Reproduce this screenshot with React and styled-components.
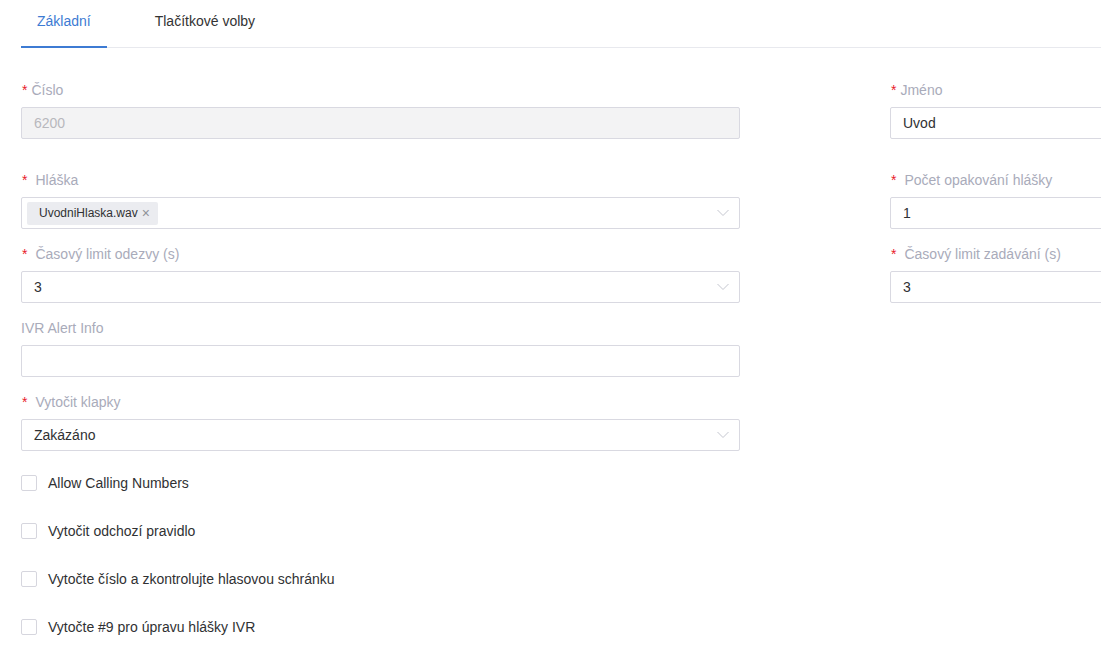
import styled, { createGlobalStyle } from "styled-components";

const GlobalStyle = createGlobalStyle`
  body {
    margin: 0;
    background: #fff;
    font-family: "Liberation Sans", Arial, sans-serif;
    overflow: hidden;
  }
`;

const Chevron = () => (
  <svg width="12" height="7" viewBox="0 0 12 7" fill="none">
    <path d="M0.5 0.5 L6 6 L11.5 0.5" stroke="#c4c6cf" strokeWidth="1" />
  </svg>
);

const Field = ({ label, required, tight, children, first }) => (
  <Item $first={first}>
    <Label>
      {required && <Star $tight={tight}>*</Star>}
      {label}
    </Label>
    {children}
  </Item>
);

const App = () => {
  return (
    <Page>
      <GlobalStyle />
      <Tabs>
        <Tab $active>Základní</Tab>
        <Tab>Tlačítkové volby</Tab>
      </Tabs>
      <Form>
        <Column>
          <Field label="Číslo" required tight first>
            <Input $disabled>6200</Input>
          </Field>
          <Field label="Hláška" required>
            <Input $tags>
              <Tag>
                UvodniHlaska.wav <TagClose>×</TagClose>
              </Tag>
              <Arrow>
                <Chevron />
              </Arrow>
            </Input>
          </Field>
          <Field label="Časový limit odezvy (s)" required>
            <Input>
              3
              <Arrow>
                <Chevron />
              </Arrow>
            </Input>
          </Field>
          <Field label="IVR Alert Info">
            <Input />
          </Field>
          <Field label="Vytočit klapky" required>
            <Input>
              Zakázáno
              <Arrow>
                <Chevron />
              </Arrow>
            </Input>
          </Field>
          <Checks>
            <CheckRow>
              <Box />
              Allow Calling Numbers
            </CheckRow>
            <CheckRow>
              <Box />
              Vytočit odchozí pravidlo
            </CheckRow>
            <CheckRow>
              <Box />
              Vytočte číslo a zkontrolujte hlasovou schránku
            </CheckRow>
            <CheckRow>
              <Box />
              Vytočte #9 pro úpravu hlášky IVR
            </CheckRow>
          </Checks>
        </Column>
        <Column>
          <Field label="Jméno" required tight first>
            <Input>Uvod</Input>
          </Field>
          <Field label="Počet opakování hlášky" required>
            <Input>1</Input>
          </Field>
          <Field label="Časový limit zadávání (s)" required>
            <Input>3</Input>
          </Field>
        </Column>
      </Form>
    </Page>
  );
};

const Page = styled.div`
  padding: 0 0 0 21px;
  width: 1600px;
`;

const Tabs = styled.div`
  display: flex;
  gap: 32px;
  height: 48px;
  box-sizing: border-box;
  border-bottom: 1px solid #e8e9ee;
`;

const Tab = styled.div`
  display: flex;
  align-items: center;
  padding: 0 16px 4px;
  font-size: 14px;
  color: ${(p) => (p.$active ? "#3d7bd3" : "#333")};
  border-bottom: 2px solid ${(p) => (p.$active ? "#3d7bd3" : "transparent")};
  margin-bottom: -1px;
`;

const Form = styled.div`
  display: grid;
  grid-template-columns: 719px 719px;
  column-gap: 150px;
  padding-top: 31px;
`;

const Column = styled.div`
  display: flex;
  flex-direction: column;
`;

const Item = styled.div`
  display: flex;
  flex-direction: column;
  margin-bottom: ${(p) => (p.$first ? "30px" : "14px")};
`;

const Label = styled.div`
  height: 22px;
  line-height: 22px;
  margin-bottom: 6px;
  font-size: 14px;
  color: #a9abba;
`;

const Star = styled.span`
  color: #e8202a;
  margin-right: ${(p) => (p.$tight ? "4px" : "8px")};
  margin-left: 1px;
`;

const Input = styled.div`
  position: relative;
  box-sizing: border-box;
  height: 32px;
  display: flex;
  align-items: center;
  padding: 0 12px 0 ${(p) => (p.$tags ? "5px" : "12px")};
  border: 1px solid #d9d9e1;
  border-radius: 2px;
  font-size: 14px;
  color: ${(p) => (p.$disabled ? "#b8b8bd" : "#303133")};
  background: ${(p) => (p.$disabled ? "#f3f3f4" : "#fff")};
`;

const Tag = styled.span`
  display: inline-flex;
  align-items: center;
  height: 23px;
  padding: 0 8px 0 12px;
  background: #ebecf0;
  border-radius: 2px;
  font-size: 12px;
  color: #303133;
`;

const TagClose = styled.span`
  margin-left: 4px;
  font-size: 14px;
  color: #909399;
`;

const Arrow = styled.span`
  position: absolute;
  right: 10px;
  top: 50%;
  transform: translateY(-50%);
  display: flex;
`;

const Checks = styled.div`
  display: flex;
  flex-direction: column;
  gap: 16px;
  padding-top: 2px;
`;

const CheckRow = styled.label`
  display: flex;
  align-items: center;
  height: 32px;
  font-size: 14px;
  color: #303133;
`;

const Box = styled.span`
  box-sizing: border-box;
  width: 16px;
  height: 16px;
  border: 1px solid #d6d6de;
  border-radius: 2px;
  margin-right: 11px;
  background: #fff;
`;

export default App;
